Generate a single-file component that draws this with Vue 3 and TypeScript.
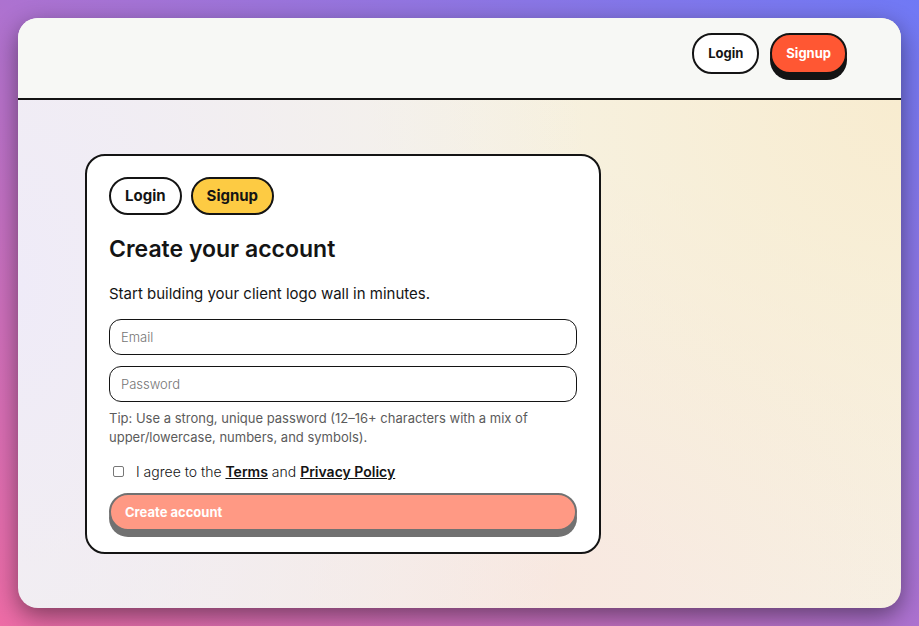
<script setup lang="ts">
import { ref } from 'vue'

type Mode = 'login' | 'signup'

const mode = ref<Mode>('signup')
const email = ref('')
const password = ref('')
const agreed = ref(false)
</script>

<template>
  <div class="page">
    <div class="window">
      <header class="topbar">
        <nav class="actions">
          <a class="btn" href="#login">Login</a>
          <a class="btn primary" href="#signup">Signup</a>
        </nav>
      </header>
      <main class="content">
        <section class="card">
          <div class="tabs">
            <button type="button" class="tab" :class="{ active: mode === 'login' }" @click="mode = 'login'">Login</button>
            <button type="button" class="tab" :class="{ active: mode === 'signup' }" @click="mode = 'signup'">Signup</button>
          </div>
          <h1>Create your account</h1>
          <p class="lead">Start building your client logo wall in minutes.</p>
          <form @submit.prevent>
            <input v-model="email" class="field" type="email" placeholder="Email" aria-label="Email" />
            <input v-model="password" class="field" type="password" placeholder="Password" aria-label="Password" />
            <p class="tip">Tip: Use a strong, unique password (12–16+ characters with a mix of upper/lowercase, numbers, and symbols).</p>
            <div class="agree">
              <input id="agree" v-model="agreed" type="checkbox" />
              <label for="agree">I agree to the <a href="#terms">Terms</a> and <a href="#privacy">Privacy Policy</a></label>
            </div>
            <button type="submit" class="btn primary submit" :disabled="!agreed">Create account</button>
          </form>
        </section>
      </main>
    </div>
  </div>
</template>

<style>
body {
  margin: 0;
}
</style>

<style scoped>
* {
  box-sizing: border-box;
}

.page {
  display: flex;
  min-height: 100vh;
  padding: 18px;
  background: linear-gradient(to top right, #ee6ca6, #ad72d0 50%, #7079f5);
  color: #141414;
  font-family: Inter, "Liberation Sans", sans-serif;
  font-weight: 300;
}

.window {
  flex: 1;
  display: flex;
  flex-direction: column;
  overflow: hidden;
  border-radius: 20px;
  background:
    radial-gradient(ellipse 65% 170% at 0% 45%, #efebf8, #efebf800),
    radial-gradient(ellipse 60% 90% at 100% 15%, #f8ecd0, #f8ecd000),
    radial-gradient(ellipse 60% 70% at 60% 95%, #f8e8e0, #f8e8e000),
    #f6f3e6;
  box-shadow: 0 8px 24px rgba(0, 0, 0, 0.45);
}

.topbar {
  display: flex;
  justify-content: flex-end;
  align-items: flex-start;
  min-height: 82px;
  padding: 15px 54px;
  border-bottom: 2px solid #141414;
  background: #f7f8f5;
}

.actions {
  display: flex;
  gap: 11px;
}

.btn {
  padding: 11px 14px;
  border: 2px solid #141414;
  border-radius: 20px;
  background: #fff;
  color: #141414;
  font-family: inherit;
  font-size: 13px;
  font-weight: 700;
  line-height: 15px;
  text-align: left;
  text-decoration: none;
}

.btn.primary {
  background: #ff5733;
  color: #fff;
  box-shadow: 0 6px 0 #141414;
}

.content {
  flex: 1;
  padding: 54px 67px;
}

.card {
  max-width: 516px;
  padding: 21px 22px;
  border: 2px solid #141414;
  border-radius: 20px;
  background: #fff;
}

.tabs {
  display: flex;
  gap: 9px;
}

.tab {
  padding: 8px 14px;
  border: 2px solid #141414;
  border-radius: 20px;
  background: #fff;
  color: #141414;
  font-family: inherit;
  font-size: 15px;
  font-weight: 700;
  line-height: 18px;
}

.tab.active {
  background: #fdcb43;
}

h1 {
  margin: 19px 0;
  font-size: 23px;
  font-weight: 600;
  line-height: 30px;
}

.lead {
  margin: 0 0 14px;
  font-size: 15px;
  font-weight: 400;
  line-height: 22px;
}

form {
  display: flex;
  flex-direction: column;
}

.field {
  width: 100%;
  height: 36px;
  margin: 0 0 11px;
  padding: 0 11px;
  border: 1px solid #141414;
  border-radius: 12px;
  background: #fff;
  color: #141414;
  font-family: inherit;
  font-size: 13px;
  font-weight: inherit;
}

.field::placeholder {
  color: #757575;
}

.tip {
  margin: -4px 0 15px;
  color: #5b5b5b;
  font-size: 13px;
  font-weight: 400;
  line-height: 19px;
}

.agree {
  display: flex;
  align-items: center;
  gap: 12px;
  margin-bottom: 12px;
  font-size: 14px;
  line-height: 19px;
}

.agree input {
  appearance: none;
  width: 11px;
  height: 11px;
  margin: 0 0 0 4px;
  border: 1px solid #777;
  border-radius: 2px;
  background: #fff;
}

.agree input:checked {
  background: #141414;
}

.agree a {
  color: inherit;
  font-weight: 600;
}

.submit {
  padding: 10px 14px;
  line-height: 14px;
}

.submit:disabled {
  opacity: 0.6;
}
</style>
